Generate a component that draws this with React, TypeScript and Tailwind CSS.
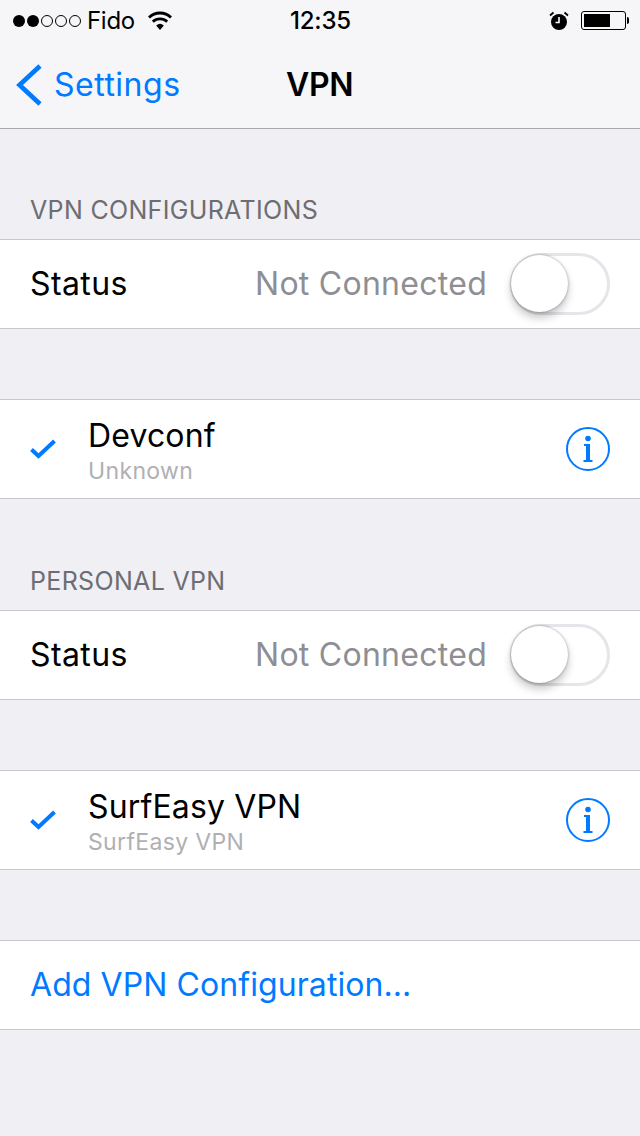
const font = { fontFamily: "Inter, 'Liberation Sans', sans-serif" };

const Toggle = () => (
  <div className="relative h-[62px] w-[100px] rounded-full border-[3px] border-[#e5e5ea] bg-white">
    <div className="absolute left-[-2px] top-[-1px] h-[57px] w-[57px] rounded-full bg-white shadow-[0_6px_8px_rgba(0,0,0,0.22),0_0_3px_rgba(0,0,0,0.35)]" />
  </div>
);

const InfoIcon = () => (
  <svg width="44" height="44" viewBox="0 0 44 44" className="shrink-0">
    <circle cx="22" cy="22" r="21" fill="none" stroke="#007aff" strokeWidth="2" />
    <circle cx="22" cy="11.5" r="2.8" fill="#007aff" />
    <path d="M18 17h6v16h2.500v2H17.500v-2h2.500V19h-2z" fill="#007aff" />
  </svg>
);

const Check = () => (
  <svg width="26" height="20" viewBox="0 0 26 20" className="shrink-0">
    <path d="M1.500 10.500L8.500 17 24.500 2" fill="none" stroke="#007aff" strokeWidth="4" />
  </svg>
);

const StatusRow = () => (
  <div className="flex h-[90px] items-center border-y border-[#c8c7cc] bg-white pl-[30px] pr-[30px]">
    <span className="flex-1 text-[32px] tracking-[0.4px] text-black">Status</span>
    <span className="mr-[23px] text-[32px] tracking-[0.27px] text-[#8e8e93]">Not Connected</span>
    <Toggle />
  </div>
);

const ConfigRow = ({ name, sub }: { name: string; sub: string }) => (
  <div className="flex h-[100px] items-center border-y border-[#c8c7cc] bg-white pl-[30px] pr-[30px]">
    <Check />
    <div className="ml-[32px] flex flex-1 flex-col pt-[2px]">
      <span className="text-[32px] leading-[40px] tracking-[0.15px] text-black">{name}</span>
      <span className="mt-[1px] text-[23px] leading-[28px] tracking-[0.35px] text-[#b0b0b4]">{sub}</span>
    </div>
    <InfoIcon />
  </div>
);

const SectionLabel = ({ children }: { children: string }) => (
  <div className="flex h-[71px] items-end pb-[14px] pl-[30px] text-[25px] leading-[30px] tracking-[0.33px] text-[#6d6d72]">
    {children}
  </div>
);

export default function App() {
  return (
    <div className="h-[1136px] w-[640px] overflow-hidden bg-[#efeff4]" style={font}>
      <div className="h-[129px] border-b border-[#a9a9ac] bg-[#f6f6f8]">
        <div className="flex h-[41px] items-center pl-[13px] pr-[11px] text-black">
          <div className="flex w-[277px] items-center">
            <div className="flex gap-[2px]">
              <span className="h-[12px] w-[12px] rounded-full bg-black" />
              <span className="h-[12px] w-[12px] rounded-full bg-black" />
              <span className="h-[12px] w-[12px] rounded-full border border-black" />
              <span className="h-[12px] w-[12px] rounded-full border border-black" />
              <span className="h-[12px] w-[12px] rounded-full border border-black" />
            </div>
            <span className="ml-[6px] text-[24px] tracking-[-0.3px]">Fido</span>
            <svg width="26" height="20" viewBox="0 0 26 20" className="ml-[12px]">
              <path d="M13 19l-3.800-4.600a5.800 5.800 0 017.600 0z" fill="#000" />
              <path d="M5.800 10.600a10.600 10.600 0 0114.400 0M2 6.400a16 16 0 0122 0" fill="none" stroke="#000" strokeWidth="2.800" />
            </svg>
          </div>
          <span className="w-[100px] text-[24px] font-medium tracking-[-0.2px]">12:35</span>
          <div className="ml-auto flex items-center">
            <svg width="20" height="20" viewBox="0 0 20 20">
              <circle cx="10" cy="11" r="8" fill="#000" />
              <path d="M10 6v5.500H6.500" fill="none" stroke="#fff" strokeWidth="1.600" />
              <path d="M1 4.500L4.500 1.500M19 4.500L15.500 1.500" stroke="#000" strokeWidth="1.800" />
            </svg>
            <div className="ml-[12px] flex h-[19px] w-[45px] items-center rounded-[3px] border border-black p-[2px]">
              <div className="h-full w-[26px] bg-black" />
            </div>
            <span className="ml-[1px] h-[7px] w-[2px] rounded-r-full bg-black" />
          </div>
        </div>
        <div className="flex h-[87px] items-center">
          <div className="flex w-[286px] items-center pl-[16px]">
            <svg width="26" height="42" viewBox="0 0 26 42">
              <path d="M24 2L3.500 21 24 40" fill="none" stroke="#007aff" strokeWidth="4.600" />
            </svg>
            <span className="ml-[12px] text-[32px] tracking-[0.5px] text-[#007aff]">Settings</span>
          </div>
          <span className="text-[32px] font-semibold tracking-[-0.3px] text-black">VPN</span>
        </div>
      </div>
      <div className="h-[39px]" />
      <SectionLabel>VPN CONFIGURATIONS</SectionLabel>
      <StatusRow />
      <div className="h-[70px]" />
      <ConfigRow name="Devconf" sub="Unknown" />
      <div className="h-[40px]" />
      <SectionLabel>PERSONAL VPN</SectionLabel>
      <StatusRow />
      <div className="h-[70px]" />
      <ConfigRow name="SurfEasy VPN" sub="SurfEasy VPN" />
      <div className="h-[70px]" />
      <div className="flex h-[90px] items-center border-y border-[#c8c7cc] bg-white pl-[30px] text-[32px] tracking-[0.08px] text-[#007aff]">
        Add VPN Configuration...
      </div>
    </div>
  );
}
